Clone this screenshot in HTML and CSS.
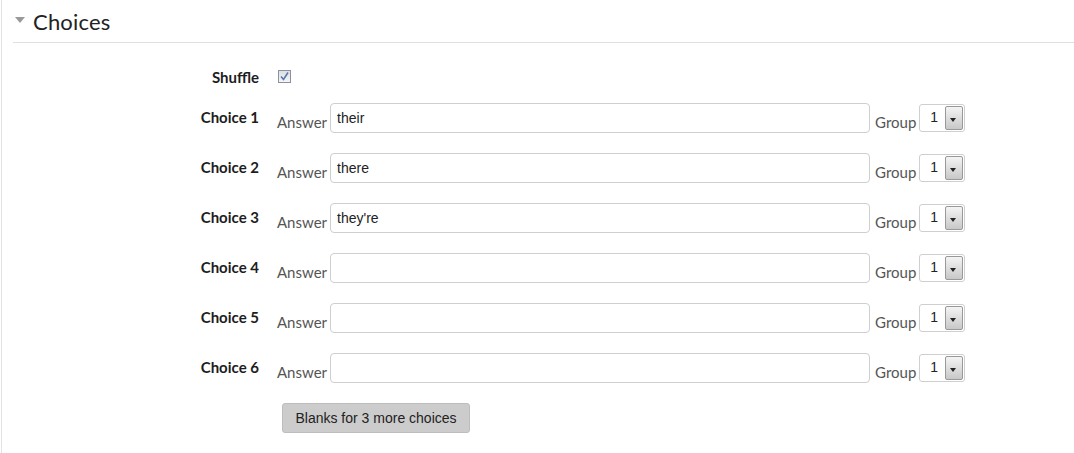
FILE: index.html
```html
<!DOCTYPE html>
<html lang="en">
<head>
    <meta charset="UTF-8">
    <title>Choices</title>
    <link rel="stylesheet" href="styles.css">
</head>
<body>
    <fieldset class="section">
        <div class="legend">
            <span class="toggle"></span>
            <span class="legend-text">Choices</span>
        </div>
        <div class="form">
            <div class="row row-check">
                <label class="label">Shuffle</label>
                <div class="controls">
                    <span class="checkbox">
                        <svg width="11" height="11" viewBox="0 0 11 11"><path d="M2 5.5 L4.5 8.5 L9 1.5" fill="none" stroke="#5b7aa8" stroke-width="1.6"/></svg>
                    </span>
                </div>
            </div>

            <div class="row">
                <label class="label">Choice 1</label>
                <div class="controls">
                    <span class="small">Answer</span>
                    <input class="text" type="text" value="their">
                    <span class="small">Group</span>
                    <span class="select"><span class="select-val">1</span><span class="select-btn"></span></span>
                </div>
            </div>
            <div class="row">
                <label class="label">Choice 2</label>
                <div class="controls">
                    <span class="small">Answer</span>
                    <input class="text" type="text" value="there">
                    <span class="small">Group</span>
                    <span class="select"><span class="select-val">1</span><span class="select-btn"></span></span>
                </div>
            </div>
            <div class="row">
                <label class="label">Choice 3</label>
                <div class="controls">
                    <span class="small">Answer</span>
                    <input class="text" type="text" value="they're">
                    <span class="small">Group</span>
                    <span class="select"><span class="select-val">1</span><span class="select-btn"></span></span>
                </div>
            </div>
            <div class="row">
                <label class="label">Choice 4</label>
                <div class="controls">
                    <span class="small">Answer</span>
                    <input class="text" type="text" value="">
                    <span class="small">Group</span>
                    <span class="select"><span class="select-val">1</span><span class="select-btn"></span></span>
                </div>
            </div>
            <div class="row">
                <label class="label">Choice 5</label>
                <div class="controls">
                    <span class="small">Answer</span>
                    <input class="text" type="text" value="">
                    <span class="small">Group</span>
                    <span class="select"><span class="select-val">1</span><span class="select-btn"></span></span>
                </div>
            </div>
            <div class="row">
                <label class="label">Choice 6</label>
                <div class="controls">
                    <span class="small">Answer</span>
                    <input class="text" type="text" value="">
                    <span class="small">Group</span>
                    <span class="select"><span class="select-val">1</span><span class="select-btn"></span></span>
                </div>
            </div>

            <div class="row row-button">
                <span class="label"></span>
                <div class="controls">
                    <button class="button" type="button">Blanks for 3 more choices</button>
                </div>
            </div>
        </div>
    </fieldset>
</body>
</html>
```

FILE: styles.css
```css
html {
    background: #fff;
    font-family: Lato, "Open Sans", sans-serif;
    font-size: 14px;
    color: #1d1d1d;
}
body {
    margin: 0;
    padding: 0;
}

.section {
    margin: 0;
    padding: 0 0 0 10px;
    border: 0;
    border-left: 1px solid #e3e3e3;
    margin-left: 1px;
    min-height: 453px;
    box-sizing: border-box;
}

.legend {
    display: flex;
    align-items: center;
    height: 42px;
    border-bottom: 1px solid #e0e0e0;
    margin-left: 1px;
    background: #fff;
}
.toggle {
    width: 0;
    height: 0;
    border-left: 5.5px solid transparent;
    border-right: 5.5px solid transparent;
    border-top: 6px solid #9a9a9a;
    margin: 0 8px 2px 2px;
}
.legend-text {
    font-size: 22px;
    color: #222;
    letter-spacing: 0.2px;
}

.form {
    padding-top: 19px;
}

.row {
    display: flex;
    align-items: center;
    height: 30px;
    margin-bottom: 20px;
}
.row-check {
    height: 30px;
    margin-bottom: 11px;
}
.label {
    width: 247px;
    text-align: right;
    font-weight: bold;
    font-size: 15px;
    padding-bottom: 2px;
}
.row-check .label {
    padding-bottom: 0;
}
.controls {
    display: flex;
    align-items: center;
    margin-left: 18px;
}

.checkbox {
    display: inline-flex;
    align-items: center;
    justify-content: center;
    width: 11px;
    height: 11px;
    border: 1px solid #8f8f9d;
    background: linear-gradient(#dcdfe6, #f4f5f8);
    margin: -2px 0 0 1px;
}

.small {
    color: #555;
    font-size: 15px;
    padding-top: 7px;
}
.text {
    width: 540px;
    height: 30px;
    box-sizing: border-box;
    margin: 0 5px 0 3px;
    padding: 4px 6px 5px;
    border: 1px solid #cfcfcf;
    border-radius: 4px;
    font-family: "Liberation Sans", Arial, sans-serif;
    font-size: 14px;
    color: #222;
    outline: none;
}

.select {
    display: inline-flex;
    align-items: stretch;
    width: 46px;
    height: 28px;
    box-sizing: border-box;
    margin-left: 3px;
    border: 1px solid #cfcfcf;
    border-radius: 3px;
    background: #fff;
}
.select-val {
    flex: 1;
    font-family: "Liberation Sans", Arial, sans-serif;
    font-size: 14px;
    color: #222;
    padding: 4px 0 0 10px;
}
.select-btn {
    position: relative;
    width: 16px;
    margin: 1px 1px 1px 0;
    border: 1px solid #999;
    border-radius: 2px;
    background: linear-gradient(#f4f4f4, #c8c8c8);
}
.select-btn::after {
    content: "";
    position: absolute;
    left: 4px;
    top: 11px;
    border-left: 3.5px solid transparent;
    border-right: 3.5px solid transparent;
    border-top: 4px solid #222;
}

.button {
    width: 188px;
    height: 30px;
    margin-left: 5px;
    border: 1px solid #bdbdbd;
    border-radius: 3px;
    background: #cccccc;
    font-family: "Liberation Sans", Arial, sans-serif;
    font-size: 14px;
    color: #222;
}
```
